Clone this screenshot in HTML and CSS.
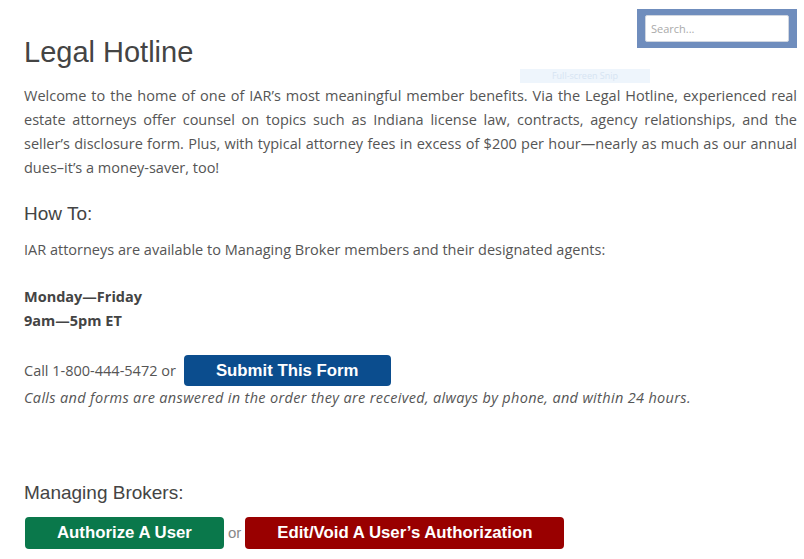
FILE: index.html
```html
<!DOCTYPE html>
<html lang="en">
<head>
    <meta charset="UTF-8">
    <meta name="viewport" content="width=device-width, initial-scale=1.0">
    <title>Legal Hotline</title>
    <link rel="stylesheet" href="styles.css">
</head>
<body>
    <!-- Header: title + search -->
    <div class="page-header">
        <h1>Legal Hotline</h1>
        <div class="search-box">
            <input type="text" class="search-input" placeholder="Search...">
        </div>
    </div>

    <div class="snip-tip">Full-screen Snip</div>

    <p class="intro">Welcome to the home of one of IAR’s most meaningful member benefits. Via the Legal Hotline, experienced real estate attorneys offer counsel on topics such as Indiana license law, contracts, agency relationships, and the seller’s disclosure form. Plus, with typical attorney fees in excess of $200 per hour—nearly as much as our annual dues–it’s a money-saver, too!</p>

    <h2>How To:</h2>
    <p class="avail">IAR attorneys are available to Managing Broker members and their designated agents:</p>

    <p class="hours"><strong>Monday—Friday<br>9am—5pm ET</strong></p>

    <div class="call-row">
        <span>Call 1-800-444-5472 or</span>
        <a href="#" class="btn btn-blue">Submit This Form</a>
    </div>
    <p class="note"><em>Calls and forms are answered in the order they are received, always by phone, and within 24 hours.</em></p>

    <h3>Managing Brokers:</h3>
    <div class="btn-row">
        <a href="#" class="btn btn-green">Authorize A User</a>
        <span class="or">or</span>
        <a href="#" class="btn btn-red">Edit/Void A User’s Authorization</a>
    </div>
</body>
</html>
```

FILE: styles.css
```css
body {
    margin: 0;
    padding: 9px 7px 0 24px;
    background: #fff;
    color: #555;
    font-family: "Open Sans", sans-serif;
    font-size: 14.5px;
    line-height: 24px;
    position: relative;
}
p {
    margin: 0;
}
.page-header {
    display: flex;
    justify-content: space-between;
    align-items: flex-start;
}
h1 {
    margin: 26px 0 0;
    font-family: "Liberation Sans", Arial, sans-serif;
    font-weight: normal;
    font-size: 29px;
    line-height: 34px;
    color: #444;
}
.search-box {
    width: 160px;
    height: 39px;
    box-sizing: border-box;
    padding: 6px 8px;
    background: #6f8dbd;
}
.search-input {
    display: block;
    width: 100%;
    height: 27px;
    box-sizing: border-box;
    border: 1px solid #d0d6e0;
    border-radius: 2px;
    padding: 0 5px;
    font-family: "Open Sans", sans-serif;
    font-size: 11px;
    color: #555;
}
.search-input::placeholder {
    color: #aaa;
}
.snip-tip {
    position: absolute;
    left: 520px;
    top: 69px;
    width: 130px;
    height: 14px;
    background: #eef5fc;
    color: #d6e4f2;
    font-size: 9px;
    line-height: 14px;
    text-align: center;
}
.intro {
    margin-top: 15px;
    text-align: justify;
}
h2 {
    margin: 22px 0 0;
    font-family: "Liberation Sans", Arial, sans-serif;
    font-weight: normal;
    font-size: 19px;
    line-height: 24px;
    color: #444;
}
.avail {
    margin-top: 12px;
}
.hours {
    margin-top: 23px;
    color: #444;
}
.call-row {
    margin-top: 22px;
    display: flex;
    align-items: center;
    gap: 8px;
}
.btn {
    display: inline-block;
    height: 31px;
    line-height: 31px;
    padding: 0 32px;
    border-radius: 4px;
    color: #fff;
    text-decoration: none;
    font-family: "Liberation Sans", Arial, sans-serif;
    font-weight: bold;
    font-size: 16.8px;
    text-align: center;
}
.btn-blue {
    background: #0b4d8e;
}
.btn-green {
    background: #0a784b;
    height: 32px;
    line-height: 32px;
}
.btn-red {
    background: #990000;
    height: 32px;
    line-height: 32px;
}
.note {
    color: #555;
    letter-spacing: 0.33px;
}
h3 {
    margin: 71px 0 0;
    font-family: "Liberation Sans", Arial, sans-serif;
    font-weight: normal;
    font-size: 19px;
    line-height: 24px;
    color: #444;
}
.btn-row {
    margin-top: 12px;
    display: flex;
    align-items: center;
    padding-left: 1px;
}
.or {
    margin: 0 4px;
    font-family: "Liberation Sans", Arial, sans-serif;
    font-size: 15px;
    color: #888;
}
```
